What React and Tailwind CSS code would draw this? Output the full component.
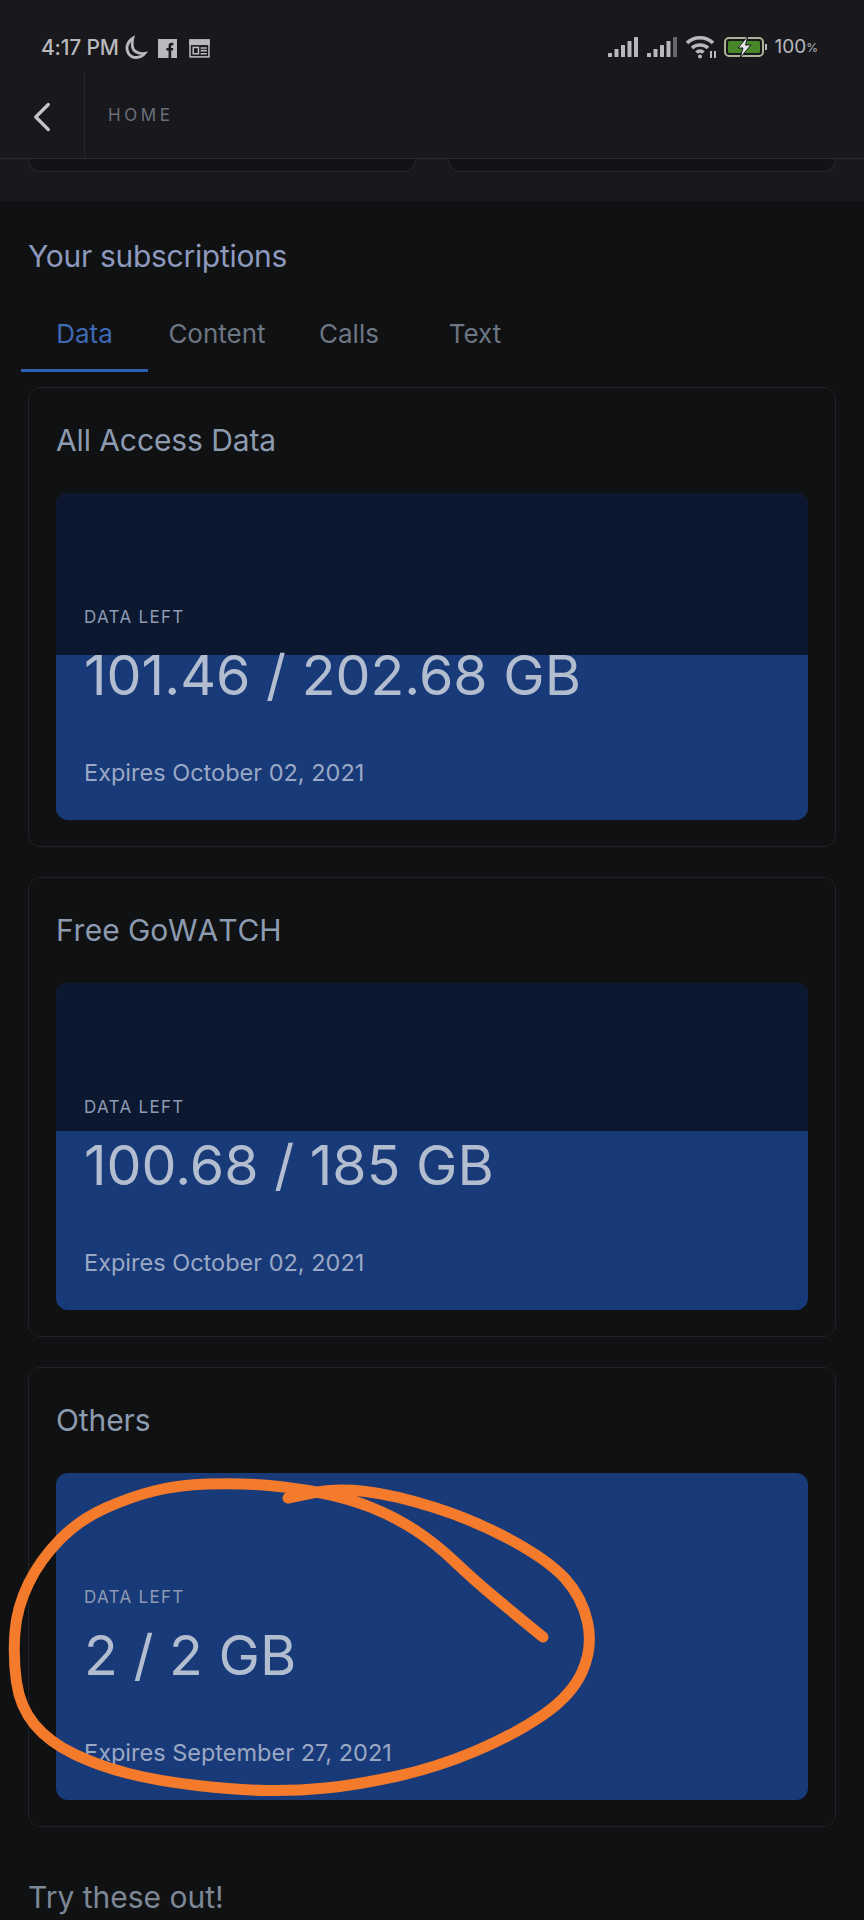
import { ChevronLeft } from "lucide-react";

const plans = [
  { name: "All Access Data", value: "101.46 / 202.68 GB", expires: "Expires October 02, 2021", used: "h-[162px]" },
  { name: "Free GoWATCH", value: "100.68 / 185 GB", expires: "Expires October 02, 2021", used: "h-[148px]" },
  { name: "Others", value: "2 / 2 GB", expires: "Expires September 27, 2021", used: "h-0" },
];

const tabs = [
  { label: "Data", width: "w-[127px]", active: true },
  { label: "Content", width: "w-[140px]" },
  { label: "Calls", width: "w-[124px]" },
  { label: "Text", width: "w-[128px]" },
];

// puntos del trazo naranja, a mano sobre la captura
const scribble = [
  [543, 1637], [510, 1610], [474, 1580], [435, 1543], [395, 1517], [348, 1498], [290, 1487], [237, 1483],
  [178, 1485], [130, 1497], [79, 1520], [40, 1560], [17, 1607], [13, 1657], [20, 1707], [49, 1742],
  [99, 1766], [158, 1781], [237, 1790], [296, 1791], [356, 1785], [435, 1768], [514, 1735], [572, 1695],
  [593, 1647], [582, 1597], [548, 1560], [474, 1520], [395, 1495], [336, 1488], [288, 1498],
];

function smoothPath(points) {
  let d = `M${points[0][0]} ${points[0][1]}`;
  for (let i = 1; i < points.length - 1; i++) {
    const midX = (points[i][0] + points[i + 1][0]) / 2;
    const midY = (points[i][1] + points[i + 1][1]) / 2;
    d += ` Q${points[i][0]} ${points[i][1]} ${midX} ${midY}`;
  }
  const last = points[points.length - 1];
  return d + ` L${last[0]} ${last[1]}`;
}

function Signal({ dim }) {
  const bars = [
    [0, 16, 4], [6.5, 12, 8], [13, 8, 12], [19.5, 4, 16], [26, 0, 20],
  ];
  return (
    <svg width="30" height="20" viewBox="0 0 30 20" fill="currentColor">
      {bars.map(([x, y, h], i) => (
        <rect key={i} x={x} y={y} width="4" height={h} rx="0.5" opacity={dim && i === 4 ? 0.5 : 1} />
      ))}
    </svg>
  );
}

function StatusBar() {
  return (
    <div className="h-[72px] flex items-start justify-between pt-[35px] pl-[41px] pr-[46px] text-[#b9b9bd]">
      <div className="flex items-center">
        <span className="text-[21px] leading-[22px] font-medium tracking-[-0.2px]">4:17 PM</span>
        <svg className="ml-[3px]" width="26" height="26" viewBox="0 0 24 24" fill="none" stroke="currentColor" strokeWidth="2.6">
          <path d="M10 3 C5 6 3 12 6 17 C9 22 17 22 21 17 C15 18 10 15 9.5 10 C9.3 7.5 9.5 5 10 3Z" />
        </svg>
        <svg className="ml-[10px]" width="19" height="19" viewBox="0 0 18 18">
          <rect width="18" height="18" fill="currentColor" />
          <path d="M10 18V11H8V8.5H10V6.5C10 4.5 11 3.5 13 3.5H14.5V6H13.5C12.7 6 12.5 6.3 12.5 7V8.500H14.500L14 11H12.500V18Z" fill="#18181d" />
        </svg>
        <svg className="ml-[12px]" width="21" height="21" viewBox="0 0 20 20" fill="none" stroke="currentColor" strokeWidth="1.5">
          <rect x="1" y="2" width="18" height="16" />
          <rect x="1" y="2" width="18" height="4" fill="currentColor" />
          <rect x="4" y="9" width="5" height="6" />
          <path d="M11 9.500H17M11 12H17M11 15H17" />
        </svg>
      </div>
      <div className="flex items-center -mt-[1px]">
        <Signal />
        <div className="ml-[9px]">
          <Signal dim />
        </div>
        <svg className="ml-[8px]" width="33" height="26" viewBox="0 0 33 26" fill="none" stroke="currentColor" strokeWidth="3.6">
          <path d="M2 9C9 2 21 2 28 9" />
          <path d="M7 14C11 10 19 10 23 14" />
          <path d="M11.500 18.500C13.500 16.500 16.500 16.500 18.500 18.500" />
          <circle cx="15" cy="22.500" r="2" fill="currentColor" stroke="none" />
          <path d="M26 17V24M30 17V24" strokeWidth="2" />
        </svg>
        <svg className="ml-[6px]" width="44" height="22" viewBox="0 0 44 22">
          <rect x="1" y="2" width="38" height="18" rx="4" fill="none" stroke="#a9b49a" strokeWidth="2" />
          <rect x="4" y="5" width="32" height="12" rx="1.500" fill="#47892a" />
          <rect x="41" y="8" width="2" height="6" fill="#b9b9bd" />
          <path d="M24 0L14 12H19L16 22L27 9H21.500Z" fill="#e4e4e4" stroke="#18181d" strokeWidth="1" />
        </svg>
        <span className="ml-[7px] text-[19px] leading-[22px]">100</span>
        <span className="text-[12px] leading-[22px] mt-[2px]">%</span>
      </div>
    </div>
  );
}

function PlanCard({ plan }) {
  return (
    <div className="h-[460px] rounded-[12px] border border-[#212225] px-[27px] pt-[34px]">
      <h3 className="text-[30px] leading-[36px] tracking-[-0.1px] [font-kerning:none] text-[#8d9bb0]">{plan.name}</h3>
      <div className="relative mt-[35px] h-[327px] rounded-[12px] overflow-hidden bg-[#193a78]">
        <div className={`absolute top-0 inset-x-0 bg-[#0b1830] ${plan.used}`} />
        <div className="relative flex flex-col px-[28px] pt-[114px]">
          <span className="text-[17px] leading-[20px] tracking-[1.3px] text-[#8e9bb3]">DATA LEFT</span>
          <span className="mt-[15px] text-[55.5px] leading-[66px] text-[#b3bdd0]">{plan.value}</span>
          <span className="mt-[51px] text-[23.5px] leading-[28px] text-[#9aa8c4]">{plan.expires}</span>
        </div>
      </div>
    </div>
  );
}

export default function App() {
  return (
    <div className="relative h-[1920px] w-[864px] overflow-hidden bg-[#101112] font-['Inter',sans-serif]">
      <header className="bg-[#18181d]">
        <StatusBar />
        <nav className="h-[87px] flex border-b border-[#2a2a30]">
          <div className="w-[85px] h-[86px] flex items-center border-r border-[#26262b] pl-[17px] pt-[4px]">
            <ChevronLeft size={50} strokeWidth={1.6} className="text-[#c4c4c8]" />
          </div>
          <div className="pl-[23px] pt-[32px] text-[17px] leading-[22px] tracking-[3.6px] text-[#6b7078]">HOME</div>
        </nav>
        <div className="h-[42px] flex gap-[32px] px-[28px]">
          <div className="flex-1 h-[13px] rounded-b-[12px] border border-t-0 border-[#26262b] bg-[#131317]" />
          <div className="flex-1 h-[13px] rounded-b-[12px] border border-t-0 border-[#26262b] bg-[#131317]" />
        </div>
      </header>

      <main className="px-[28px]">
        <h2 className="pt-[36px] text-[30px] leading-[38px] tracking-[-0.3px] text-[#8d99bd]">Your subscriptions</h2>
        <div className="-mx-[7px] mt-[31px] flex">
          {tabs.map((tab) => (
            <div
              key={tab.label}
              className={`${tab.width} h-[66px] pt-[12px] text-center text-[26px] leading-[32px] ${
                tab.active ? "border-b-[3px] border-[#2f5fb0] text-[#3f69b4]" : "pr-[2px] text-[#6d7684]"
              }`}
            >
              {tab.label}
            </div>
          ))}
        </div>
        <div className="mt-[15px] flex flex-col gap-[30px]">
          {plans.map((plan) => (
            <PlanCard key={plan.name} plan={plan} />
          ))}
        </div>
        <h2 className="pt-[51px] text-[30px] leading-[38px] text-[#7d8796]">Try these out!</h2>
      </main>

      {/* anotación a mano encima de la captura */}
      <svg className="absolute inset-0 pointer-events-none" width="864" height="1920" viewBox="0 0 864 1920" fill="none">
        <path d={smoothPath(scribble)} stroke="#f47a2c" strokeWidth="11" strokeLinecap="round" strokeLinejoin="round" />
      </svg>
    </div>
  );
}
